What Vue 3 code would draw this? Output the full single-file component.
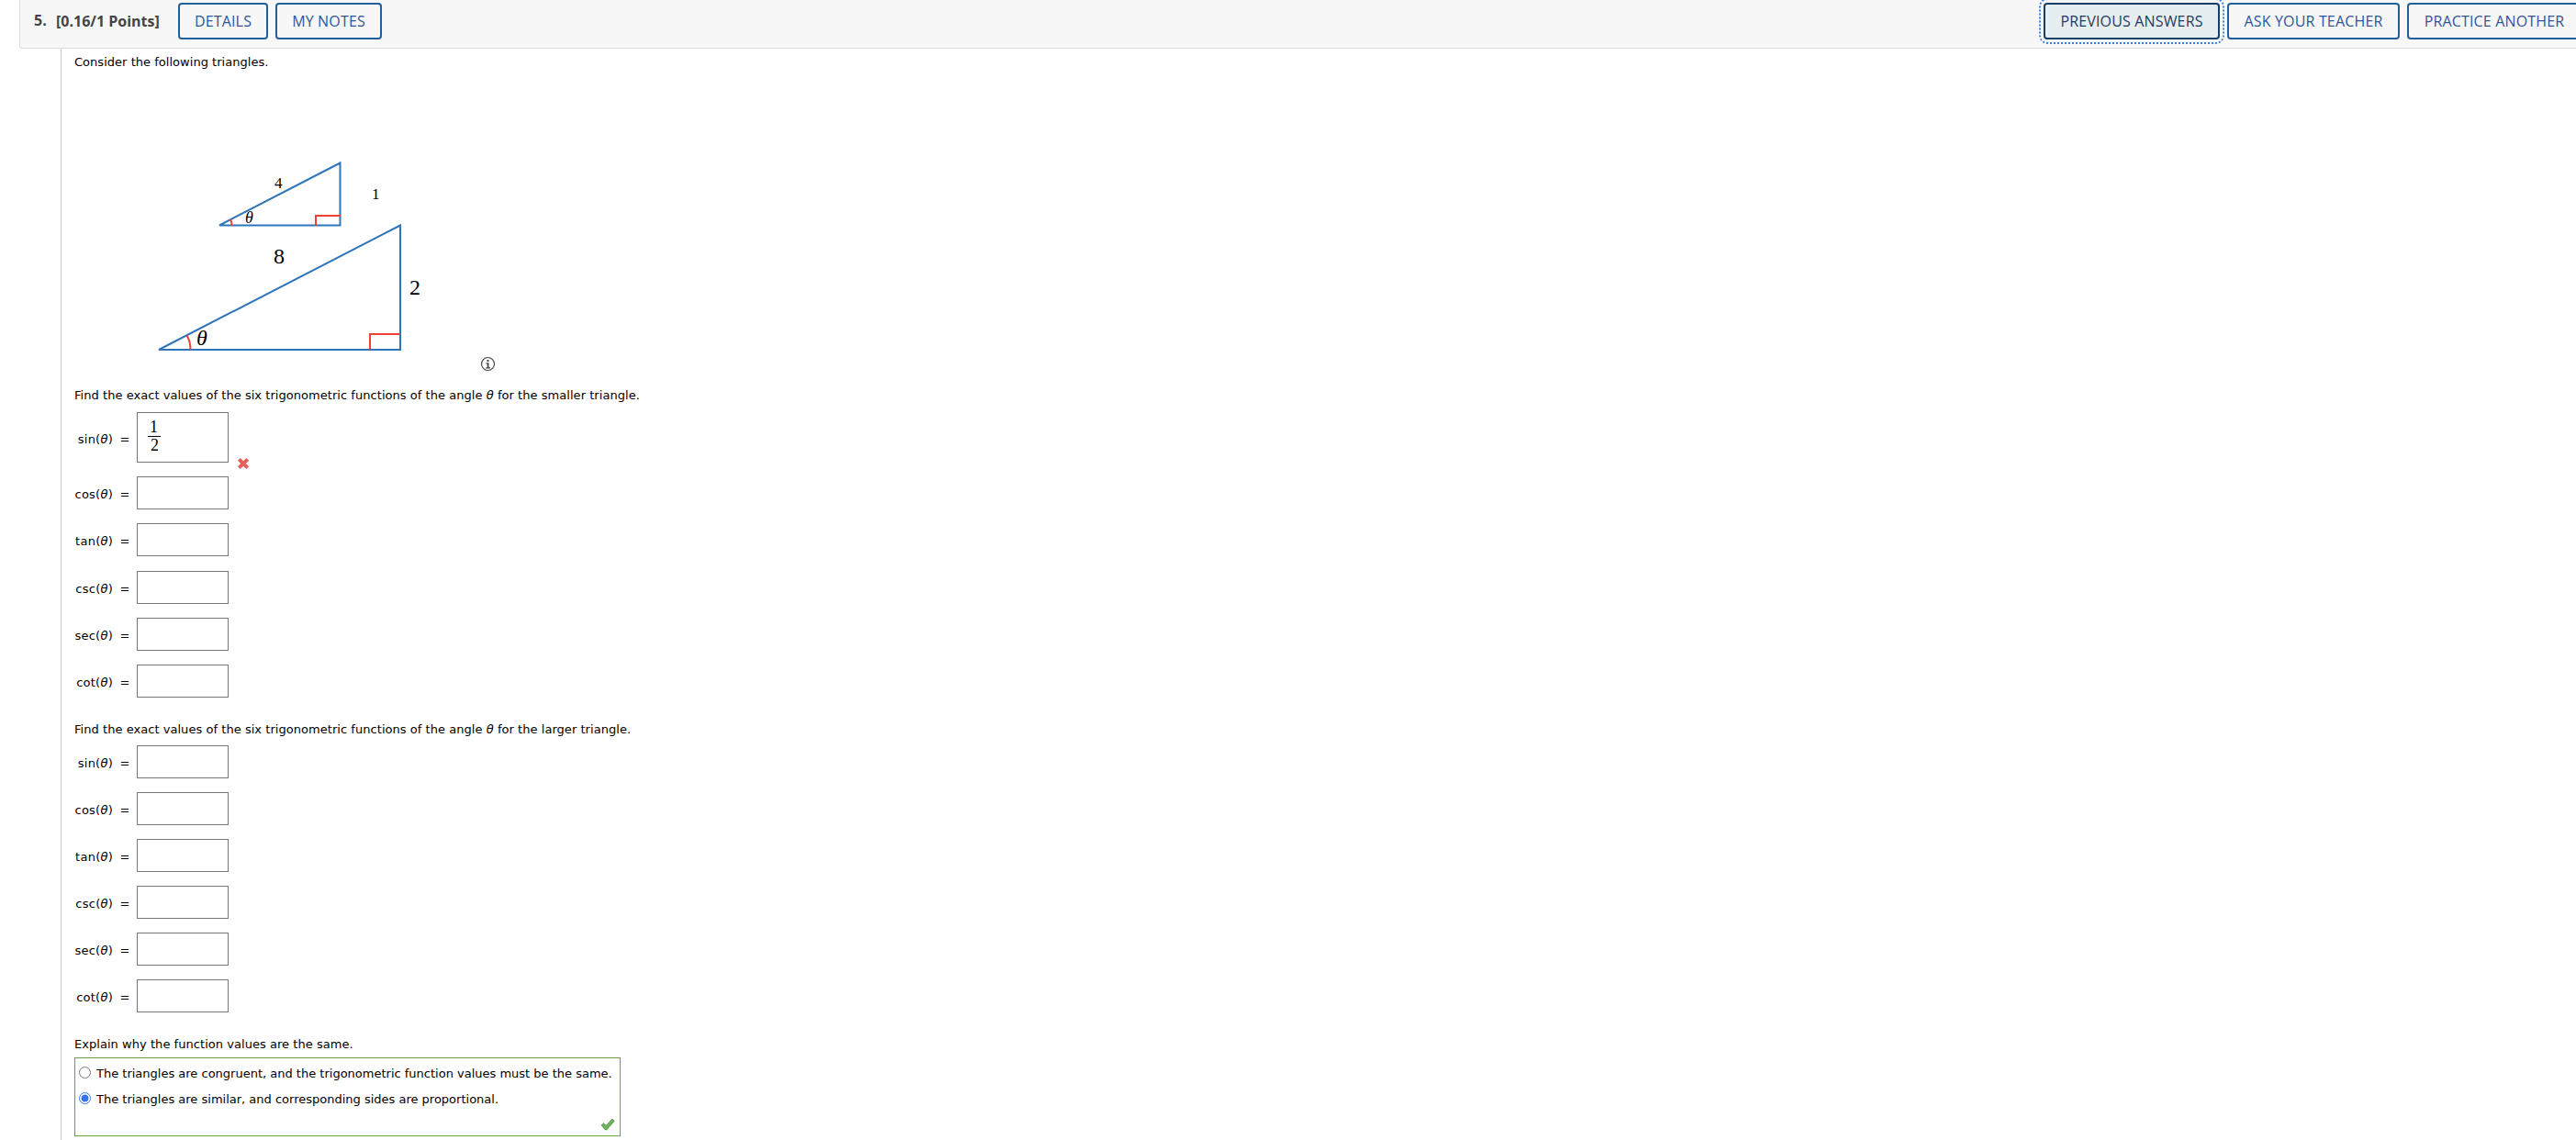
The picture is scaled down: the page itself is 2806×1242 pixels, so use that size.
<template>
  <div class="page">
    <!-- Question Header -->
    <header class="question-header">
      <span class="question-number">5.</span>
      <span class="points">[0.16/1 Points]</span>
      <div class="header-left">
        <button class="header-button details">DETAILS</button>
        <button class="header-button notes">MY NOTES</button>
      </div>
      <div class="header-right">
        <button class="header-button previous">PREVIOUS ANSWERS</button>
        <button class="header-button teacher">ASK YOUR TEACHER</button>
        <button class="header-button practice">PRACTICE ANOTHER</button>
      </div>
    </header>

    <!-- Question Body -->
    <main class="question-body">
      <p class="intro">Consider the following triangles.</p>

      <svg class="triangles" width="480" height="330" viewBox="81 80 480 330">
        <g class="side">
          <path d="M239 245.5H370.500V177.500Z" />
          <path d="M173 381H436V245.500Z" />
        </g>
        <g class="mark">
          <path d="M251 239Q252.500 242 252.500 246" />
          <path d="M344 246V235H371" />
          <path d="M203.500 365.500Q207.500 372 207.500 381" />
          <path d="M403 381V364H436" />
        </g>
        <g class="side-label">
          <text x="299" y="204.500" font-size="17">4</text>
          <text x="405" y="217" font-size="17">1</text>
          <text x="298" y="287" font-size="24">8</text>
          <text x="446" y="321" font-size="24">2</text>
          <text x="267" y="243" font-size="18" font-style="italic">θ</text>
          <text x="214" y="376" font-size="24" font-style="italic">θ</text>
        </g>
        <circle class="info-ring" cx="531.500" cy="396.500" r="7" />
        <path class="info-stem" d="M530.500 392h2v2h-2zM529.500 395.300h3v5h1.500v1.200h-4.800v-1.200h1.500v-3.800h-1.200z" />
      </svg>

      <p class="prompt">Find the exact values of the six trigonometric functions of the angle <i>θ</i> for the smaller triangle.</p>
      <div class="answers">
        <div v-for="row in smaller" :key="row.name" class="answer-row">
          <span class="fn-label">{{ row.name }}(<i>θ</i>)</span>
          <span class="equals">=</span>
          <div :class="['answer-box', { filled: row.top }]">
            <div v-if="row.top" class="fraction">
              <span class="numerator">{{ row.top }}</span>
              <span class="denominator">{{ row.bottom }}</span>
            </div>
          </div>
          <svg v-if="row.wrong" class="wrong-icon" width="14" height="14" viewBox="0 0 14 14">
            <path d="M2.300 2.300L11.700 11.700M11.700 2.300L2.300 11.700" />
          </svg>
        </div>
      </div>

      <p class="prompt larger">Find the exact values of the six trigonometric functions of the angle <i>θ</i> for the larger triangle.</p>
      <div class="answers larger-answers">
        <div v-for="name in functions" :key="name" class="answer-row">
          <span class="fn-label">{{ name }}(<i>θ</i>)</span>
          <span class="equals">=</span>
          <div class="answer-box"></div>
        </div>
      </div>

      <p class="prompt explain">Explain why the function values are the same.</p>
      <div class="choices">
        <div v-for="(choice, index) in choices" :key="index" class="choice" @click="selected = index">
          <span :class="['radio', { checked: selected === index }]"></span>
          <span>{{ choice }}</span>
        </div>
        <svg class="right-icon" width="16" height="14" viewBox="0 0 16 14">
          <path d="M1 8L3.500 5.800L6.300 8.300L12.800 1L15.300 3.300L6.800 13H5.500Z" />
        </svg>
      </div>
    </main>
  </div>
</template>

<script setup>
import { ref } from 'vue'

const functions = ['sin', 'cos', 'tan', 'csc', 'sec', 'cot']

const smaller = functions.map((name) =>
  name === 'sin' ? { name, top: '1', bottom: '2', wrong: true } : { name }
)

const choices = [
  'The triangles are congruent, and the trigonometric function values must be the same.',
  'The triangles are similar, and corresponding sides are proportional.'
]

const selected = ref(1)
</script>

<style>
body {
  background: #ffffff;
  overflow: hidden;
}
</style>

<style scoped>
.page {
  width: 2806px;
  height: 1242px;
  display: flex;
  flex-direction: column;
  overflow: hidden;
  font-family: 'DejaVu Sans', Verdana, sans-serif;
  font-size: 13px;
  color: #000000;
}

/* Question Header */
.question-header {
  box-sizing: border-box;
  flex: none;
  display: flex;
  align-items: flex-start;
  height: 53px;
  margin-left: 21px;
  padding-top: 3px;
  background: #f7f7f7;
  border-left: 1px solid #dddddd;
  border-bottom: 1px solid #dddddd;
  border-bottom-left-radius: 3px;
  font-family: 'Open Sans', 'Noto Sans', sans-serif;
  font-size: 16px;
  line-height: 40px;
  white-space: nowrap;
}

.question-number {
  width: 24px;
  padding-left: 15px;
  font-size: 16px;
  font-weight: 700;
  line-height: 39px;
  color: #444444;
}

.points {
  width: 133px;
  font-size: 16px;
  font-weight: 700;
  color: #444444;
}

.header-left,
.header-right {
  display: flex;
  gap: 8px;
}

.header-right {
  margin-left: auto;
}

.header-button {
  box-sizing: border-box;
  flex: none;
  height: 40px;
  padding: 0;
  background: #f7f7f7;
  border: 2px solid #225f99;
  border-radius: 4px;
  font-family: inherit;
  font-size: 16px;
  line-height: 36px;
  letter-spacing: 0.16px;
  color: #2f5597;
}

.details {
  width: 98px;
}

.notes {
  width: 116px;
}

.previous {
  width: 192px;
  background: #e6eef2;
  border-color: #163f66;
  color: #1d3c5e;
  outline: 2px dotted #3b7de0;
  outline-offset: 3px;
}

.teacher {
  width: 188px;
}

.practice {
  width: 190px;
  margin-right: -6px;
}

/* Question Body */
.question-body {
  box-sizing: border-box;
  flex: 1;
  display: flex;
  flex-direction: column;
  align-items: flex-start;
  margin-left: 66px;
  padding-left: 14px;
  border-left: 1px solid #c4c4c4;
}

p {
  margin: 0;
  line-height: 20px;
  white-space: nowrap;
}

.intro {
  padding-top: 5px;
  letter-spacing: 0.03px;
}

.triangles {
  display: block;
  flex: none;
  margin-top: 2px;
}

.side {
  fill: none;
  stroke: #2e75b9;
  stroke-width: 2;
}

.mark {
  fill: none;
  stroke: #ee3e36;
  stroke-width: 2;
}

.side-label {
  font-family: 'Liberation Serif', serif;
  fill: #000000;
}

.info-ring {
  fill: none;
  stroke: #444444;
  stroke-width: 1.2;
}

.info-stem {
  fill: #444444;
}

.prompt {
  margin-top: 11px;
  letter-spacing: 0.045px;
}

/* Answer Rows */
.answers {
  display: flex;
  flex-direction: column;
  gap: 15.2px;
  margin-top: 8px;
}

.larger-answers {
  gap: 15px;
  margin-top: 7px;
}

.answer-row {
  display: flex;
  align-items: center;
}

.fn-label {
  width: 42px;
  padding-top: 3px;
  display: flex;
  justify-content: flex-end;
  letter-spacing: 0.25px;
  white-space: nowrap;
}

.equals {
  width: 11px;
  padding-top: 3px;
  margin: 0 7.5px 0 7.5px;
}

.answer-box {
  box-sizing: border-box;
  width: 100px;
  height: 36px;
  border: 1px solid #767676;
}

.answer-box.filled {
  height: 55px;
}

.fraction {
  display: flex;
  flex-direction: column;
  width: 13px;
  margin: 6px 0 0 12px;
  font-family: 'Liberation Serif', serif;
  font-size: 18px;
  line-height: 19px;
  text-align: center;
}

.numerator {
  margin-left: -1px;
  padding-right: 1px;
  border-bottom: 1px solid #000000;
}

.wrong-icon {
  align-self: flex-end;
  margin: 0 0 -8px 9px;
}

.wrong-icon path {
  fill: none;
  stroke: #e8605c;
  stroke-width: 4;
}

.larger {
  margin-top: 25px;
}

.explain {
  margin-top: 25px;
}

/* Choices */
.choices {
  box-sizing: border-box;
  display: flex;
  flex-direction: column;
  width: 595px;
  height: 86px;
  margin-top: 4px;
  padding: 3px 5px 3px 4px;
  border: 1px solid #6a9f45;
}

.choice {
  display: flex;
  align-items: center;
  gap: 6px;
  height: 28px;
  white-space: nowrap;
}

.radio {
  box-sizing: border-box;
  width: 13px;
  height: 13px;
  margin-bottom: 3px;
  border: 1px solid #767676;
  border-radius: 50%;
}

.radio.checked {
  border-color: #3374f6;
  background: radial-gradient(circle, #3374f6 0 3.7px, #ffffff 4.3px);
}

.right-icon {
  align-self: flex-end;
  margin-top: 6px;
}

.right-icon path {
  fill: #6fb35c;
  stroke: #4b8a41;
  stroke-width: 0.7;
}
</style>
